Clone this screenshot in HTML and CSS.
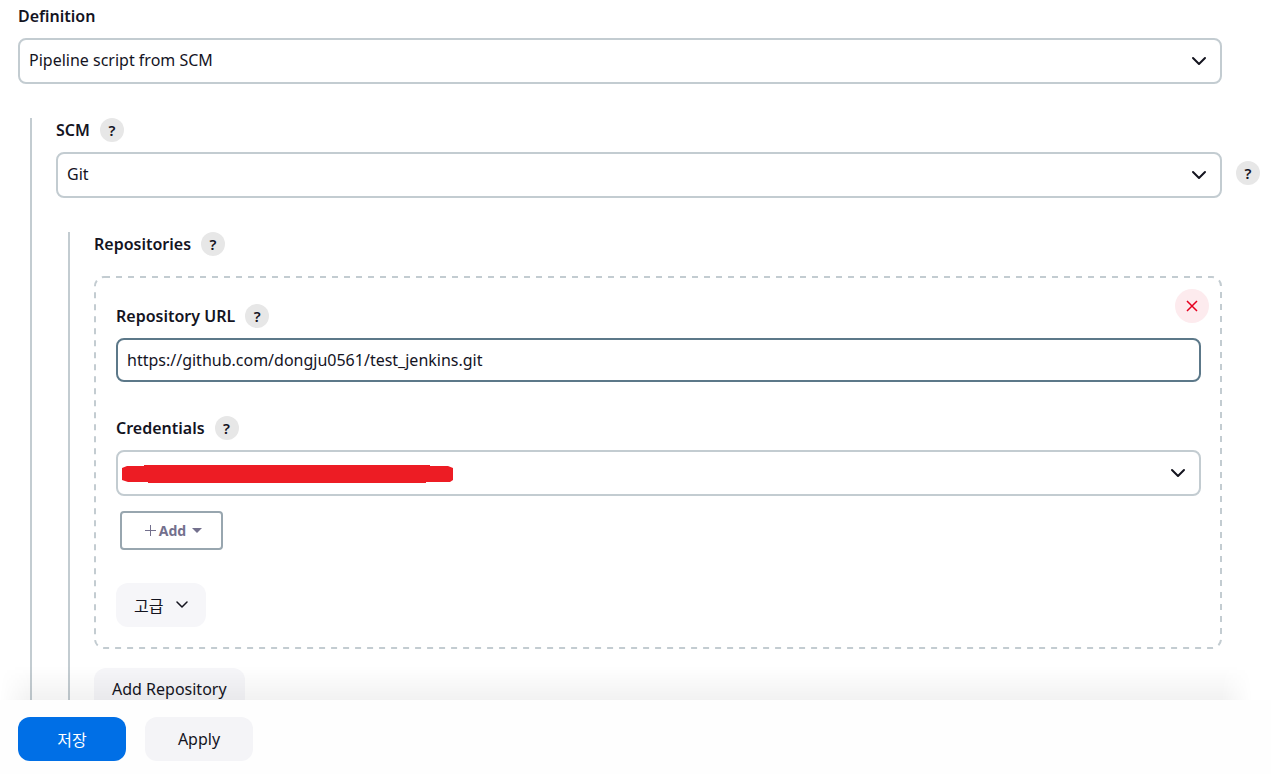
FILE: index.html
```html
<!DOCTYPE html>
<html lang="ko">
<head>
  <meta charset="UTF-8">
  <meta name="viewport" content="width=device-width, initial-scale=1.0">
  <title>Pipeline Configuration</title>
  <link rel="stylesheet" href="styles.css">
</head>
<body>
  <form class="config-form">
    <main class="config-body">
      <div class="form-item">
        <div class="form-label"><label for="definition">Definition</label></div>
        <select class="select" id="definition">
          <option>Pipeline script from SCM</option>
        </select>
      </div>

      <!-- SCM -->
      <section class="nested">
        <div class="form-item">
          <div class="form-label">
            <label for="scm">SCM</label>
            <button type="button" class="help-button" aria-label="Help for SCM">?</button>
          </div>
          <div class="select-row">
            <select class="select" id="scm">
              <option>Git</option>
            </select>
            <button type="button" class="help-button side-help" aria-label="Help for Git">?</button>
          </div>
        </div>

        <!-- Repositories -->
        <section class="nested">
          <div class="form-label">
            <span>Repositories</span>
            <button type="button" class="help-button" aria-label="Help for Repositories">?</button>
          </div>

          <div class="repo-box">
            <svg class="repo-outline"><rect x="1" y="1" rx="9"/></svg>
            <button type="button" class="delete-button" aria-label="Delete">
              <svg width="12" height="12" viewBox="0 0 12 12"><path d="M1 1l10 10M11 1L1 11"/></svg>
            </button>

            <div class="form-item">
              <div class="form-label">
                <label for="repo-url">Repository URL</label>
                <button type="button" class="help-button" aria-label="Help for Repository URL">?</button>
              </div>
              <input class="text-input" type="text" id="repo-url" value="https://github.com/dongju0561/test_jenkins.git">
            </div>

            <div class="form-label">
              <label for="credentials">Credentials</label>
              <button type="button" class="help-button" aria-label="Help for Credentials">?</button>
            </div>
            <div class="select-row">
              <select class="select" id="credentials">
                <option></option>
              </select>
              <svg class="redaction" width="332" height="19" viewBox="0 0 332 19"><path d="M5 1H22V0H308V1H326L331 3V15L328 17H304V18H26V17H6L0 15V3Z"/></svg>
            </div>

            <button type="button" class="add-button">
              <svg width="11" height="11" viewBox="0 0 11 11"><path class="plus" d="M5.5 0V11M0 5.5H11"/></svg>
              <span>Add</span>
              <svg class="caret" width="10" height="5" viewBox="0 0 10 5"><path d="M0 0H10L5 5Z"/></svg>
            </button>

            <button type="button" class="button advanced-button">
              고급
              <svg width="12" height="8" viewBox="0 0 12 8"><path d="M1 1l5 5 5-5"/></svg>
            </button>
          </div>

          <button type="button" class="button add-repository">Add Repository</button>
        </section>
      </section>
    </main>

    <footer class="bottom-bar">
      <button type="submit" class="button primary">저장</button>
      <button type="button" class="button apply">Apply</button>
    </footer>
  </form>
</body>
</html>
```
FILE: styles.css
```css
* {
  margin: 0;
  padding: 0;
  box-sizing: border-box;
}

body,
button,
input,
select {
  font-family: "Noto Sans", "Noto Sans CJK KR", sans-serif;
  font-size: 16px;
  color: #14141f;
}

body {
  background-color: #fff;
}

button {
  border: none;
  cursor: pointer;
}

.config-form {
  display: flex;
  flex-direction: column;
  height: 100vh;
}

.config-body {
  flex: 1;
  min-height: 0;
  overflow-y: auto;
  scrollbar-width: none;
  padding: 4px 49px 0 18px;
}

/* Fields */
.form-item {
  margin-bottom: 34px;
}

.form-label {
  display: flex;
  align-items: center;
  gap: 10px;
  height: 24px;
  margin-bottom: 10px;
  font-weight: 600;
}

.select,
.text-input {
  display: block;
  width: 100%;
  padding: 0 9px;
  border: 2px solid #c3ccd1;
  border-radius: 8px;
  background-color: #fff;
}

.select {
  height: 46px;
  padding-bottom: 2px;
  appearance: none;
  background-image: url("data:image/svg+xml,%3Csvg xmlns='http://www.w3.org/2000/svg' width='16' height='10' viewBox='0 0 16 10'%3E%3Cpath d='M2 2l6 6 6-6' fill='none' stroke='%2314141f' stroke-width='2' stroke-linecap='round' stroke-linejoin='round'/%3E%3C/svg%3E");
  background-repeat: no-repeat;
  background-position: right 13px center;
}

.text-input {
  height: 44px;
  border-color: #5c7889;
  outline: none;
}

.select-row {
  position: relative;
}

.help-button {
  width: 24px;
  height: 24px;
  border-radius: 50%;
  background-color: #e7e7e7;
  font-size: 15px;
  font-weight: 600;
  line-height: 24px;
}

.side-help {
  position: absolute;
  top: 9px;
  left: calc(100% + 14px);
}

/* Nested sections */
.nested {
  margin-left: 12px;
  padding-left: 24px;
  border-left: 2px solid #c3ccd1;
}

.repo-box {
  position: relative;
  margin: 20px 0 19px;
  padding: 28px 21px 22px 22px;
}

.repo-outline {
  position: absolute;
  top: 0;
  left: 0;
  width: 100%;
  height: 100%;
  pointer-events: none;
}

.repo-outline rect {
  width: calc(100% - 2px);
  height: calc(100% - 2px);
  fill: none;
  stroke: #c3ccd1;
  stroke-width: 2;
  stroke-dasharray: 6 6;
}

.delete-button {
  position: absolute;
  top: 13px;
  right: 13px;
  display: flex;
  align-items: center;
  justify-content: center;
  width: 34px;
  height: 34px;
  border-radius: 50%;
  background-color: #fdebee;
}

.delete-button path {
  stroke: #e6001f;
  stroke-width: 1.5;
}

.redaction {
  position: absolute;
  top: 15px;
  left: 6px;
  fill: #ed1c24;
}

/* Buttons */
.button {
  display: flex;
  align-items: center;
  justify-content: center;
  height: 44px;
  padding: 0 18px;
  border-radius: 12px;
  background-color: #f6f6f9;
}

.add-repository {
  height: 42px;
}

.add-button {
  display: flex;
  align-items: center;
  justify-content: center;
  gap: 3px;
  width: 103px;
  height: 39px;
  margin: 15px 4px 33px;
  padding-left: 4px;
  border: 2px solid #98a6af;
  border-radius: 4px;
  background-color: #fff;
  color: #73708d;
  font-size: 14px;
  font-weight: 700;
}

.plus {
  stroke: #73708d;
}

.caret {
  margin-left: 3px;
  fill: #73708d;
}

.advanced-button {
  gap: 13px;
}

.advanced-button path {
  fill: none;
  stroke: #14141f;
  stroke-width: 1.5;
  stroke-linecap: round;
  stroke-linejoin: round;
}

/* Bottom bar */
.bottom-bar {
  position: relative;
  display: flex;
  gap: 19px;
  padding: 17px 18px 13px;
  background-color: #fefefe;
}

.bottom-bar::before {
  content: "";
  position: absolute;
  bottom: 100%;
  left: 0;
  right: 19px;
  height: 34px;
  background: linear-gradient(transparent, rgba(0, 0, 0, 0.05));
  mask-image: linear-gradient(to right, transparent, #000 30px, #000 calc(100% - 30px), transparent);
  pointer-events: none;
}

.primary,
.apply {
  width: 108px;
}

.primary {
  background-color: #006fe6;
  color: #fff;
}

.apply {
  background-color: #f4f4f7;
}
```
